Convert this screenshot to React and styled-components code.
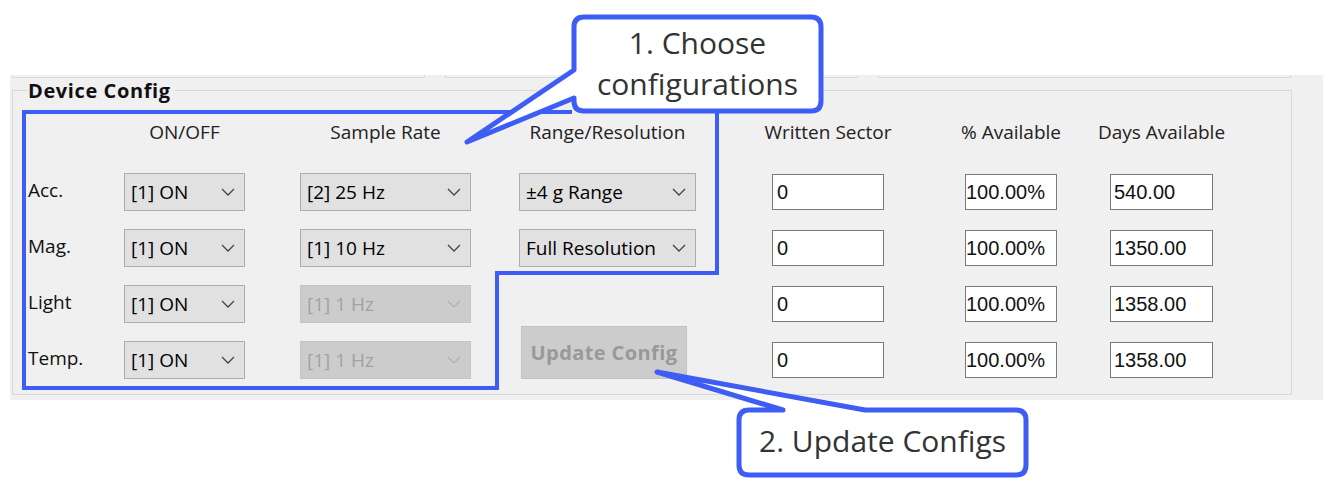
import React from 'react';
import styled, { createGlobalStyle } from 'styled-components';

const BLUE = '#3d5df4';

const GlobalStyle = createGlobalStyle`
  html, body {
    margin: 0;
    padding: 0;
    background: #fff;
  }
  body {
    font-family: "Open Sans", "Noto Sans", sans-serif;
  }
`;

// Page + window chrome
const Page = styled.div`
  position: relative;
  width: 1328px;
  height: 485px;
  overflow: hidden;
  background: #fff;
  padding-top: 75px;
  box-sizing: border-box;
`;

const Window = styled.div`
  margin-left: 10px;
  width: 1313px;
  background: #f0f0f0;
  padding: 0 0 5px 2px;
  box-sizing: border-box;
`;

const TopStrip = styled.div`
  display: flex;
  gap: 20px;
  height: 3px;
`;

const StripBox = styled.div`
  width: 413px;
  border: 1px solid #dcdcdc;
  border-top: none;
  box-sizing: border-box;
`;

const GroupBox = styled.div`
  position: relative;
  margin-top: 12px;
  width: 1280px;
  border: 1px solid #d9d9d9;
  box-sizing: border-box;
  padding: 17px 0 15px 15px;
`;

const Legend = styled.div`
  position: absolute;
  top: -12px;
  left: 15px;
  padding-right: 4px;
  background: #f0f0f0;
  font-size: 20px;
  font-weight: 700;
  line-height: 24px;
  letter-spacing: 0.6px;
  color: #111;
`;

const ConfigGrid = styled.div`
  display: grid;
  grid-template-columns: 96px 176px 219px 253px 193px 145px 1fr;
  grid-template-rows: 47px repeat(4, 38px);
  row-gap: 18px;
  align-items: center;
`;

const Header = styled.div`
  width: ${(p) => p.$w}px;
  display: flex;
  justify-content: center;
  white-space: nowrap;
  font-size: 19px;
  color: #222;
`;

const RowLabel = styled.div`
  font-size: 19px;
  color: #111;
  margin-bottom: 4px;
`;

const Combo = styled.div`
  box-sizing: border-box;
  width: ${(p) => p.$w}px;
  height: 38px;
  display: flex;
  align-items: center;
  justify-content: space-between;
  padding: 0 9px 0 6px;
  background: ${(p) => (p.$disabled ? '#cccccc' : '#e1e1e1')};
  border: 1px solid ${(p) => (p.$disabled ? '#c4c4c4' : '#adadad')};
  color: ${(p) => (p.$disabled ? '#a2a2a2' : '#000')};
  font-size: 19px;
  white-space: nowrap;
`;

const TextBox = styled.input`
  box-sizing: border-box;
  width: ${(p) => p.$w}px;
  height: 36px;
  margin: 0;
  padding: 0 0 0 ${(p) => p.$pad}px;
  border: 1px solid #7a7a7a;
  background: #fff;
  font-family: "Liberation Sans", Arial, sans-serif;
  font-size: 20px;
  color: #111;
  outline: none;
`;

const UpdateButton = styled.div`
  grid-column: 4;
  grid-row: 4 / span 2;
  align-self: end;
  justify-self: start;
  margin-left: 2px;
  width: 166px;
  height: 53px;
  box-sizing: border-box;
  display: flex;
  align-items: center;
  justify-content: center;
  background: #cccccc;
  border: 1px solid #c2c2c2;
  color: #999999;
  font-size: 20px;
  font-weight: 700;
  letter-spacing: 0.4px;
`;

// Annotation overlay
const Overlay = styled.svg`
  position: absolute;
  left: 0;
  top: 0;
  pointer-events: none;
`;

const CalloutText = styled.div`
  position: absolute;
  left: ${(p) => p.$x}px;
  top: ${(p) => p.$y}px;
  width: ${(p) => p.$w}px;
  text-align: center;
  font-family: "Open Sans", sans-serif;
  font-size: 30px;
  line-height: 41px;
  color: #333;
  pointer-events: none;
`;

const Chevron = ({ color }) => (
  <svg width="14" height="8" viewBox="0 0 14 8">
    <polyline points="1,1 7,7 13,1" fill="none" stroke={color} strokeWidth="1.3" />
  </svg>
);

const Select = ({ w, value, disabled }) => (
  <Combo $w={w} $disabled={disabled}>
    <span>{value}</span>
    <Chevron color={disabled ? '#b3b3b3' : '#444'} />
  </Combo>
);

const rows = [
  { label: 'Acc.', rate: '[2] 25 Hz', range: '±4 g Range', days: '540.00' },
  { label: 'Mag.', rate: '[1] 10 Hz', range: 'Full Resolution', days: '1350.00' },
  { label: 'Light', rate: '[1] 1 Hz', rateOff: true, days: '1358.00' },
  { label: 'Temp.', rate: '[1] 1 Hz', rateOff: true, days: '1358.00' },
];

const headers = [
  ['ON/OFF', 121],
  ['Sample Rate', 171],
  ['Range/Resolution', 177],
  ['Written Sector', 112],
  ['% Available', 92],
  ['Days Available', 103],
];

export default function App() {
  return (
    <Page>
      <GlobalStyle />
      <Window>
        <TopStrip>
          <StripBox />
          <StripBox />
          <StripBox />
        </TopStrip>
        <GroupBox>
          <Legend>Device Config</Legend>
          <ConfigGrid>
            <div />
            {headers.map(([text, w]) => (
              <Header key={text} $w={w}>{text}</Header>
            ))}
            {rows.map((r) => (
              <React.Fragment key={r.label}>
                <RowLabel>{r.label}</RowLabel>
                <Select w={121} value="[1] ON" />
                <Select w={171} value={r.rate} disabled={r.rateOff} />
                {r.range && <Select w={177} value={r.range} />}
                <TextBox $w={112} $pad={4} readOnly value="0" />
                <TextBox $w={92} $pad={0} readOnly value="100.00%" />
                <TextBox $w={103} $pad={3} readOnly value={r.days} />
              </React.Fragment>
            ))}
            <UpdateButton>Update Config</UpdateButton>
          </ConfigGrid>
        </GroupBox>
      </Window>

      <Overlay width="1328" height="485" viewBox="0 0 1328 485">
        <path
          d="M 572 112 L 24 112 L 24 388 L 497 388 L 497 273 L 717 273 L 717 111"
          fill="none"
          stroke={BLUE}
          strokeWidth="4"
        />
        <path
          d="M 584 17 H 811 Q 821 17 821 27 V 101 Q 821 111 811 111 H 584 Q 574 111 574 101 V 98 L 467 142 L 574 70 V 27 Q 574 17 584 17 Z"
          fill="#fff"
          stroke={BLUE}
          strokeWidth="5"
          strokeLinejoin="round"
        />
        <path
          d="M 749 410 H 783 L 657 372 L 865 410 H 1016 Q 1026 410 1026 420 V 465 Q 1026 475 1016 475 H 749 Q 739 475 739 465 V 420 Q 739 410 749 410 Z"
          fill="#fff"
          stroke={BLUE}
          strokeWidth="5"
          strokeLinejoin="round"
        />
      </Overlay>
      <CalloutText $x={574} $y={22} $w={247}>
        1. Choose
        <br />
        configurations
      </CalloutText>
      <CalloutText $x={739} $y={420} $w={287}>
        2. Update Configs
      </CalloutText>
    </Page>
  );
}
